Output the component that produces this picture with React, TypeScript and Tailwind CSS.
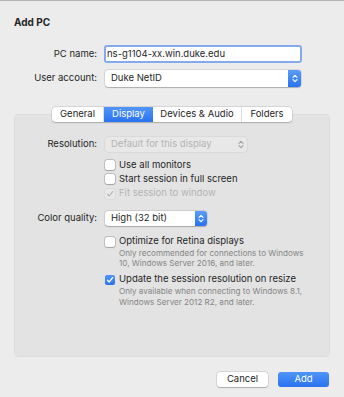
import React from "react";

function Updown({ color }: { color: string }) {
  return (
    <svg width="6" height="9" viewBox="0 0 6 9" fill="none" stroke={color} strokeWidth="1.1" strokeLinecap="round" strokeLinejoin="round">
      <path d="M1 3.3L3 1.3L5 3.3" />
      <path d="M1 5.7L3 7.7L5 5.7" />
    </svg>
  );
}

function Box({ checked, disabled }: { checked?: boolean; disabled?: boolean }) {
  if (checked) {
    return (
      <div className="w-[10px] h-[10px] rounded-[2px] bg-gradient-to-b from-[#4f95f8] to-[#2a72ef] flex items-center justify-center shrink-0">
        <svg width="8" height="8" viewBox="0 0 8 8" fill="none" stroke="white" strokeWidth="1.3" strokeLinecap="round" strokeLinejoin="round">
          <path d="M1.5 4.2L3.2 6L6.6 1.6" />
        </svg>
      </div>
    );
  }
  if (disabled) {
    return (
      <div className="w-[10px] h-[10px] rounded-[2px] bg-[#e9e9e9] shadow-[0_0_0_0.5px_rgba(0,0,0,0.08)] flex items-center justify-center shrink-0">
        <svg width="8" height="8" viewBox="0 0 8 8" fill="none" stroke="#b4b4b4" strokeWidth="1.2" strokeLinecap="round" strokeLinejoin="round">
          <path d="M1.5 4.2L3.2 6L6.6 1.6" />
        </svg>
      </div>
    );
  }
  return <div className="w-[10px] h-[10px] rounded-[2px] bg-white shadow-[0_0_0_0.5px_rgba(0,0,0,0.3),0_0.5px_1px_rgba(0,0,0,0.15)] shrink-0" />;
}

export default function App() {
  return (
    <div className="w-[344px] h-[397px] bg-[#ececec] border-t border-[#b4b4b4] font-['Inter',sans-serif] text-[#262626] flex flex-col px-[14px] overflow-hidden">
      <div className="mt-[14px] h-[14px] leading-[14px] text-[10px] font-bold">Add PC</div>

      <div className="mt-[16px] flex items-center h-[18px]">
        <div className="w-[83px] text-right text-[9.5px]">PC name:</div>
        <div className="ml-[7px] w-[198px] h-[18px] rounded-[3px] border-2 border-[#84aaee] bg-white flex items-center pl-[1px] text-[9.5px]">
          ns-g1104-xx.win.duke.edu
        </div>
      </div>

      <div className="mt-[7px] flex items-center h-[17px]">
        <div className="w-[83px] text-right text-[9.5px]">User account:</div>
        <div className="ml-[8px] w-[196px] h-[17px] rounded-[3px] bg-white shadow-[0_0_0_0.5px_rgba(0,0,0,0.15),0_0.5px_1px_rgba(0,0,0,0.2)] flex items-center text-[9.5px]">
          <div className="flex-1 pl-[6px]">Duke NetID</div>
          <div className="w-[13px] h-full rounded-r-[3px] bg-gradient-to-b from-[#5a9df9] to-[#2a72ef] flex items-center justify-center">
            <Updown color="white" />
          </div>
        </div>
      </div>

      <div className="mt-[20px] self-center relative z-10 flex h-[15px] rounded-[4px] bg-white shadow-[0_0_0_0.5px_rgba(0,0,0,0.12),0_0.5px_1.5px_rgba(0,0,0,0.2)] text-[9.5px]">
        <div className="w-[52px] flex items-center justify-center border-r border-[#dcdcdc]">General</div>
        <div className="w-[49px] flex items-center justify-center bg-gradient-to-b from-[#4f95f8] to-[#2a72ef] text-white">Display</div>
        <div className="w-[89px] flex items-center justify-center border-r border-[#dcdcdc]">Devices &amp; Audio</div>
        <div className="w-[50px] flex items-center justify-center">Folders</div>
      </div>

      <div className="-mt-[8px] h-[243px] rounded-[5px] bg-[#e3e3e3] shadow-[inset_0_0_0_0.5px_rgba(0,0,0,0.05)] pt-[23px] flex flex-col text-[9.5px]">
        <div className="flex items-center h-[15px]">
          <div className="w-[83px] text-right">Resolution:</div>
          <div className="ml-[8px] w-[142px] h-[15px] rounded-[3px] bg-[#e8e8e8] shadow-[0_0_0_0.5px_rgba(0,0,0,0.08)] flex items-center text-[#b3b3b3]">
            <div className="flex-1 pl-[6px]">Default for this display</div>
            <div className="w-[13px] flex items-center justify-center">
              <Updown color="#a0a0a0" />
            </div>
          </div>
        </div>

        <div className="mt-[6px] h-[14px] flex items-center pl-[91px] gap-[4px]">
          <Box />
          <span>Use all monitors</span>
        </div>
        <div className="h-[14px] flex items-center pl-[91px] gap-[4px]">
          <Box />
          <span>Start session in full screen</span>
        </div>
        <div className="h-[15px] flex items-center pl-[91px] gap-[4px] text-[#b3b3b3]">
          <Box disabled />
          <span>Fit session to window</span>
        </div>

        <div className="mt-[10px] flex items-center h-[14px]">
          <div className="w-[83px] text-right">Color quality:</div>
          <div className="ml-[8px] w-[102px] h-[15px] rounded-[3px] bg-white shadow-[0_0_0_0.5px_rgba(0,0,0,0.15),0_0.5px_1px_rgba(0,0,0,0.2)] flex items-center">
            <div className="flex-1 pl-[6px]">High (32 bit)</div>
            <div className="w-[12px] h-full rounded-r-[3px] bg-gradient-to-b from-[#5a9df9] to-[#2a72ef] flex items-center justify-center">
              <Updown color="white" />
            </div>
          </div>
        </div>

        <div className="mt-[10px] h-[13px] flex items-center pl-[91px] gap-[4px]">
          <Box />
          <span>Optimize for Retina displays</span>
        </div>
        <div className="pl-[105px] text-[8.1px] leading-[10px] text-[#858585]">
          <div>Only recommended for connections to Windows</div>
          <div>10, Windows Server 2016, and later.</div>
        </div>

        <div className="mt-[5px] h-[13px] flex items-center pl-[91px] gap-[4px]">
          <Box checked />
          <span>Update the session resolution on resize</span>
        </div>
        <div className="pl-[105px] text-[8.1px] leading-[10.5px] text-[#858585]">
          <div>Only available when connecting to Windows 8.1,</div>
          <div>Windows Server 2012 R2, and later.</div>
        </div>
      </div>

      <div className="mt-[15px] flex justify-end gap-[10px] text-[9.5px]">
        <div className="w-[51px] h-[15px] rounded-[3px] bg-white shadow-[0_0_0_0.5px_rgba(0,0,0,0.15),0_0.5px_1px_rgba(0,0,0,0.2)] flex items-center justify-center">
          Cancel
        </div>
        <div className="w-[51px] h-[15px] rounded-[3px] bg-gradient-to-b from-[#4f95f8] to-[#2a72ef] text-white flex items-center justify-center mr-[1px]">
          Add
        </div>
      </div>
    </div>
  );
}
